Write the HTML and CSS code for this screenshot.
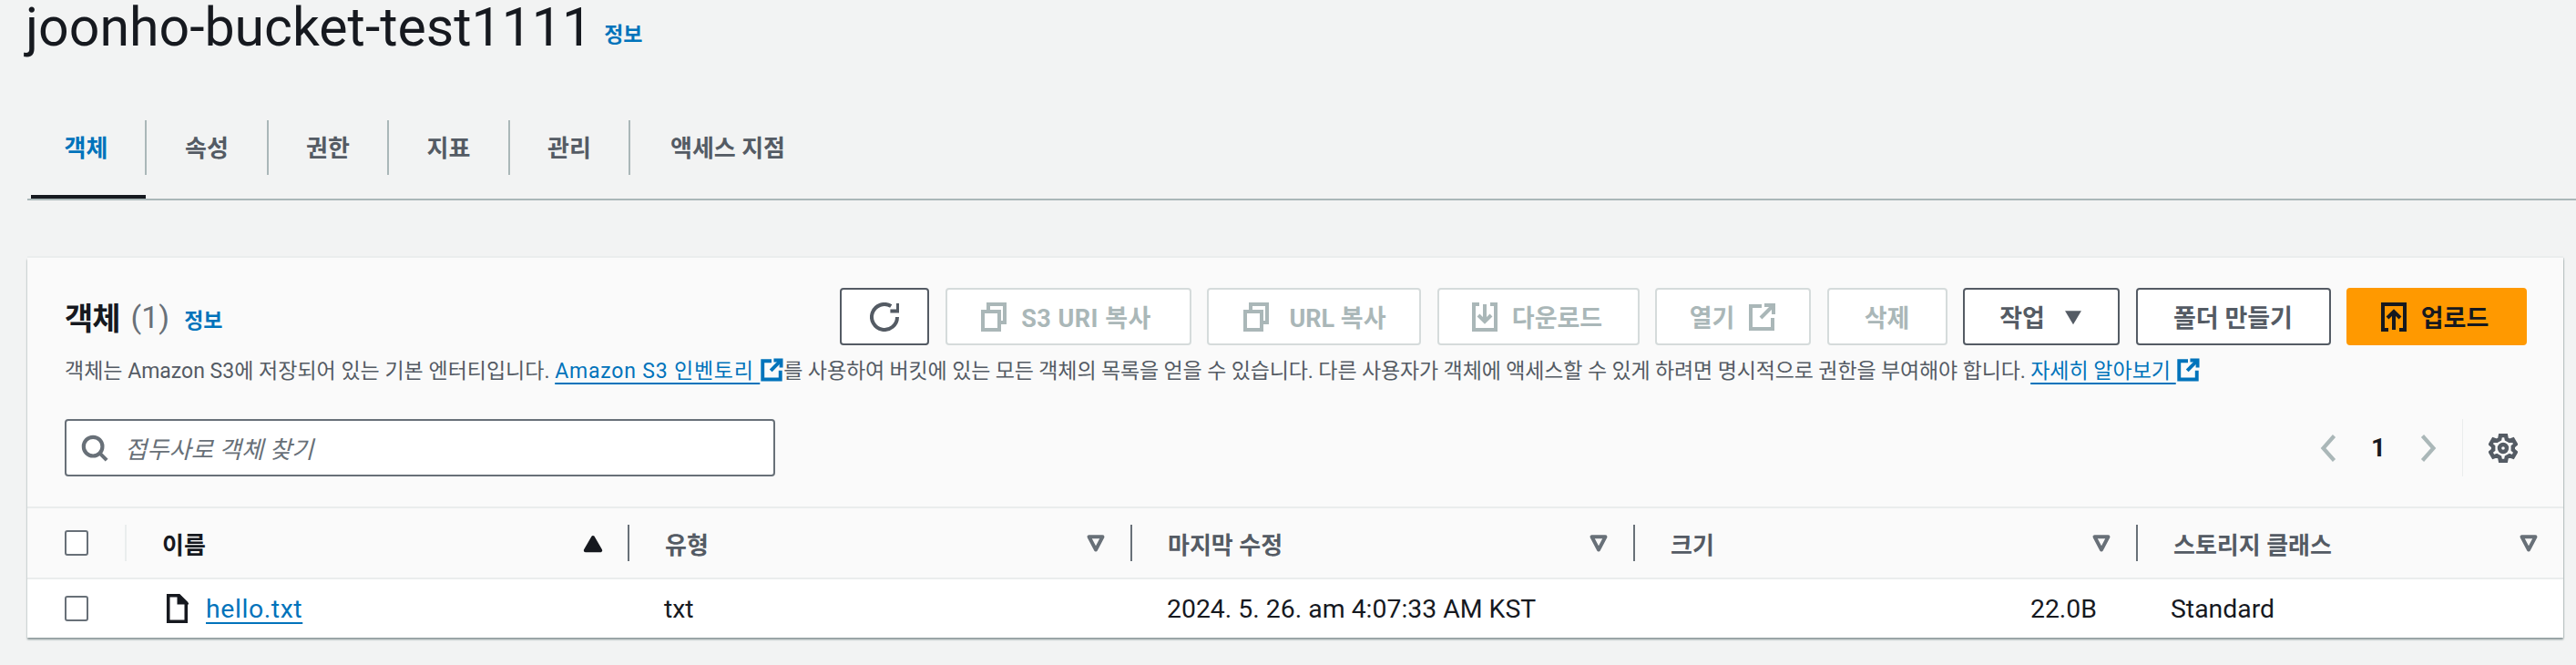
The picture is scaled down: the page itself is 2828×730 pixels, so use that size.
FILE: index.html
```html
<!DOCTYPE html>
<html lang="ko">
<head>
    <meta charset="UTF-8">
    <title>joonho-bucket-test1111</title>
    <link rel="stylesheet" href="styles.css">
</head>
<body>

<!-- 버킷 제목 -->
<div class="page-title">
    <h1>joonho-bucket-test1111</h1>
    <a class="info title-info">정보</a>
</div>

<!-- 탭 -->
<div class="tabs">
    <a class="tab active tab-a">객체</a>
    <a class="tab tab-b">속성</a>
    <a class="tab tab-c">권한</a>
    <a class="tab tab-d">지표</a>
    <a class="tab tab-e">관리</a>
    <a class="tab tab-f">액세스 지점</a>
</div>

<div class="card">
    <div class="card-header">
        <div class="title-row">
            <div class="card-title">
                <h2>객체</h2>
                <span class="count">(1)</span>
                <a class="info">정보</a>
            </div>
            <div class="actions">
                <button class="btn btn-refresh">
                    <svg class="icon" viewBox="0 0 16 16"><path d="M15 8a7 7 0 1 1-3.38-6"/><path d="M15.5 .5v4.3h-4.3"/></svg>
                </button>
                <button class="btn disabled btn-s3">
                    <svg class="icon" viewBox="0 0 16 16"><path d="M2 5h9v10H2z"/><path d="M5 5V1h9v10h-3"/></svg>
                    S3 URI 복사
                </button>
                <button class="btn disabled btn-url">
                    <svg class="icon" viewBox="0 0 16 16"><path d="M2 5h9v10H2z"/><path d="M5 5V1h9v10h-3"/></svg>
                    URL 복사
                </button>
                <button class="btn disabled btn-down">
                    <svg class="icon" viewBox="0 0 16 16"><path d="M5 1H2v14h12V1h-3"/><path d="M8 1v9"/><path d="M4.5 7 8 10.5 11.5 7"/></svg>
                    다운로드
                </button>
                <button class="btn disabled btn-open">
                    열기
                    <svg class="icon" viewBox="0 0 16 16"><path d="M14 8.5V14.5H2V2h6"/><path d="M9.5 1.5h5v5"/><path d="M14.5 1.5 7.5 8.5"/></svg>
                </button>
                <button class="btn disabled btn-del">삭제</button>
                <button class="btn btn-act">
                    작업
                    <svg class="caret" viewBox="0 0 16 16"><path d="M1.5 3h13L8 14z"/></svg>
                </button>
                <button class="btn btn-folder">폴더 만들기</button>
                <button class="btn primary btn-up">
                    <svg class="icon" viewBox="0 0 16 16"><path d="M5 1H2v14h3"/><path d="M11 1h3v14h-3"/><path d="M2 1h12"/><path d="M8 15V6"/><path d="M4.5 8.5 8 5l3.5 3.5"/></svg>
                    업로드
                </button>
            </div>
        </div>
        <p class="desc">객체는 Amazon S3에 저장되어 있는 기본 엔터티입니다. <a class="link wide">Amazon S3 인벤토리 </a><svg class="ext" viewBox="0 0 16 16"><path d="M14 8.5V14.5H2V2h6"/><path d="M9.5 1.5h5v5"/><path d="M14.5 1.5 7.5 8.5"/></svg><span class="desc-rest">를 사용하여 버킷에 있는 모든 객체의 목록을 얻을 수 있습니다. 다른 사용자가 객체에 액세스할 수 있게 하려면 명시적으로 권한을 부여해야 합니다. </span><a class="link">자세히 알아보기 </a><svg class="ext" viewBox="0 0 16 16"><path d="M14 8.5V14.5H2V2h6"/><path d="M9.5 1.5h5v5"/><path d="M14.5 1.5 7.5 8.5"/></svg></p>
        <div class="filter-row">
            <div class="search">
                <svg class="search-icon" viewBox="0 0 16 16"><circle cx="7" cy="7" r="5.5"/><path d="m11 11 4 4"/></svg>
                <span class="placeholder">접두사로 객체 찾기</span>
            </div>
            <div class="pager">
                <svg class="chev" viewBox="0 0 12 20"><path d="M10 1 2 10l8 9"/></svg>
                <span class="page-num">1</span>
                <svg class="chev" viewBox="0 0 12 20"><path d="m2 1 8 9-8 9"/></svg>
                <div class="pager-line">
                    <svg class="gear" viewBox="0 0 16 16"><path d="M6.5 1h3l.4 2 1.6.9 1.9-.7 1.5 2.6-1.5 1.3v1.8l1.5 1.3-1.5 2.6-1.9-.7-1.6.9-.4 2h-3l-.4-2-1.6-.9-1.9.7-1.5-2.6 1.5-1.3V7.1L1.1 5.8l1.5-2.6 1.9.7 1.6-.9z"/><circle cx="8" cy="8" r="2"/></svg>
                </div>
            </div>
        </div>
    </div>

    <div class="table-head">
        <div class="th"><span class="checkbox"></span></div>
        <div class="th"><div class="th-in first sorted">이름<svg class="sort" viewBox="0 0 16 16"><path class="fill" d="M8 4 13.5 13.5H2.5z"/></svg></div></div>
        <div class="th"><div class="th-in">유형<svg class="sort" viewBox="0 0 16 16"><path d="M3 3.5h10L8 13z"/></svg></div></div>
        <div class="th"><div class="th-in">마지막 수정<svg class="sort" viewBox="0 0 16 16"><path d="M3 3.5h10L8 13z"/></svg></div></div>
        <div class="th"><div class="th-in">크기<svg class="sort" viewBox="0 0 16 16"><path d="M3 3.5h10L8 13z"/></svg></div></div>
        <div class="th"><div class="th-in">스토리지 클래스<svg class="sort" viewBox="0 0 16 16"><path d="M3 3.5h10L8 13z"/></svg></div></div>
    </div>
    <div class="table-row">
        <div class="td"><span class="checkbox"></span></div>
        <div class="td td-name">
            <svg class="file" viewBox="0 0 14 18"><path d="M1.5 1h6.5l4.5 4.5V17h-11z"/><path class="fill" d="M8 1l4.5 4.5H8z"/></svg>
            <a class="link">hello.txt</a>
        </div>
        <div class="td td-pad">txt</div>
        <div class="td td-pad">2024. 5. 26. am 4:07:33 AM KST</div>
        <div class="td td-size">22.0B</div>
        <div class="td td-pad">Standard</div>
    </div>
</div>

</body>
</html>
```

FILE: styles.css
```css
body {
    margin: 0;
    background-color: #f2f3f3;
    color: #16191f;
    font-family: Roboto, "Noto Sans CJK KR", sans-serif;
    font-size: 28.4px;
    height: 730px;
    overflow: hidden;
}
a {
    color: #0073bb;
}
svg {
    fill: none;
    stroke: currentColor;
    stroke-width: 2;
}

.page-title {
    display: flex;
    align-items: center;
    height: 60px;
    padding-left: 28px;
}
h1 {
    margin: 0;
    font-size: 59px;
    font-weight: 400;
    line-height: 60px;
}
.info {
    font-size: 23px;
    font-weight: 700;
}
.title-info {
    margin: 12px 0 0 13px;
}

.tabs {
    display: flex;
    height: 88px;
    margin: 70px 0 0 30px;
    border-bottom: 2px solid #aab7b8;
}
.tab {
    display: flex;
    align-items: center;
    justify-content: center;
    height: 60px;
    margin-top: 2px;
    padding-bottom: 3px;
    color: #545b64;
    font-size: 26px;
    font-weight: 700;
    border-right: 2px solid #aab7b8;
    box-sizing: border-box;
}
.tab-a { width: 131px; }
.tab-b { width: 134px; }
.tab-c { width: 132px; }
.tab-d { width: 133px; }
.tab-e { width: 132px; }
.tab-f { width: 214px; border-right: none; }
.tab.active {
    position: relative;
    color: #0073bb;
}
.tab.active::after {
    content: "";
    position: absolute;
    left: 4px;
    right: -1px;
    top: 82px;
    height: 4px;
    background-color: #16191f;
}

.card {
    margin: 63px 14px 0 30px;
    background-color: #fff;
    box-shadow: 0 2px 2px #879596, 0 -2px 0 #eaeded, 1px 0 1px #d5dbdb;
}
.card-header {
    background-color: #fafafa;
    padding: 33px 40px 33px 41px;
    border-bottom: 2px solid #eaeded;
}
.title-row {
    display: flex;
    align-items: center;
    justify-content: space-between;
}
.card-title {
    display: flex;
    align-items: center;
}
h2 {
    margin: 0;
    font-size: 34px;
    font-weight: 700;
    letter-spacing: -1px;
}
.count {
    margin-left: 12px;
    color: #687078;
    font-size: 34px;
}
.card-title .info {
    margin: 4px 0 0 16px;
}

.actions {
    display: flex;
    gap: 17.5px;
}
.btn {
    display: flex;
    align-items: center;
    justify-content: center;
    gap: 14px;
    height: 63px;
    padding: 0;
    background-color: #fff;
    border: 2px solid #545b64;
    border-radius: 4px;
    color: #545b64;
    font-family: inherit;
    font-size: 27px;
    font-weight: 700;
}
.btn.disabled {
    border-color: #d5dbdb;
    color: #aab7b8;
}
.btn.primary {
    background-color: #ff9900;
    border-color: #ff9900;
    color: #16191f;
}
.btn-refresh { width: 98px; }
.btn-s3 { width: 270px; letter-spacing: .5px; padding-right: 6px; }
.btn-url { width: 235px; gap: 20px; }
.btn-down { width: 222px; padding-right: 4px; }
.btn-open { width: 171px; }
.btn-del { width: 132px; }
.btn-act { width: 172px; }
.btn-folder { width: 214px; }
.btn-up { width: 198px; padding-right: 6px; }
.icon {
    width: 32px;
    height: 32px;
}
.caret {
    width: 22px;
    height: 22px;
    margin-left: 6px;
    fill: currentColor;
    stroke: none;
}

.desc {
    height: 28px;
    margin: 13px 0 0;
    color: #545b64;
    font-size: 23px;
    line-height: 28px;
    white-space: nowrap;
}
.desc-rest {
    letter-spacing: -.14px;
}
.link {
    text-decoration: underline;
    text-underline-offset: 5px;
    text-decoration-thickness: 2px;
}
.link.wide {
    letter-spacing: .8px;
}
.ext {
    width: 26px;
    height: 28px;
    color: #0073bb;
    vertical-align: -5px;
    stroke-width: 2.4;
}

.filter-row {
    display: flex;
    justify-content: space-between;
    margin-top: 40px;
}
.search {
    display: flex;
    align-items: center;
    width: 780px;
    height: 63px;
    padding-left: 16px;
    background-color: #fff;
    border: 2px solid #687078;
    border-radius: 4px;
    box-sizing: border-box;
}
.search-icon {
    width: 30px;
    height: 30px;
    color: #687078;
    stroke-width: 2.2;
}
.placeholder {
    margin-left: 18px;
    color: #687078;
    font-size: 26.4px;
    font-style: italic;
}
.pager {
    display: flex;
    align-items: center;
}
.chev {
    width: 19px;
    height: 30px;
    color: #aab7b8;
    stroke-width: 2.8;
}
.page-num {
    margin: 0 37px;
    font-size: 28px;
    font-weight: 700;
}
.pager-line {
    display: flex;
    align-items: center;
    height: 63px;
    margin-left: 28px;
    padding: 0 10px 0 28px;
    border-left: 1px solid #eaeded;
}
.gear {
    width: 32px;
    height: 32px;
    color: #545b64;
    stroke-width: 2.2;
}

.table-head, .table-row {
    display: grid;
    grid-template-columns: 107px 552px 552px 552px 552px 1fr;
}
.table-head {
    height: 76px;
    background-color: #fafafa;
    border-bottom: 2px solid #eaeded;
}
.th {
    display: flex;
    align-items: center;
    color: #545b64;
    font-size: 26px;
    font-weight: 700;
}
.th:first-child, .td:first-child {
    padding-left: 41px;
}
.th-in {
    display: flex;
    align-items: center;
    justify-content: space-between;
    flex: 1;
    height: 40px;
    padding: 0 26px 0 39px;
    border-left: 2px solid #687078;
}
.th-in.first {
    border-left-color: #eaeded;
    color: #16191f;
}
.sort {
    width: 24px;
    height: 24px;
    stroke-width: 2.6;
    stroke-linejoin: round;
    color: #687078;
}
.sorted .sort {
    color: #16191f;
}
.fill {
    fill: currentColor;
}
.checkbox {
    display: block;
    width: 26px;
    height: 28px;
    background-color: #fff;
    border: 2px solid #687078;
    border-radius: 3px;
    box-sizing: border-box;
}
.table-row {
    height: 64px;
    align-items: center;
}
.td-name {
    display: flex;
    align-items: center;
    gap: 19px;
    padding-left: 45px;
}
.td-name .link {
    letter-spacing: .6px;
}
.file {
    width: 25px;
    height: 32px;
    stroke-width: 2;
}
.td-pad {
    padding-left: 40px;
}
.td-size {
    padding-right: 43px;
    text-align: right;
}
.td-pad:last-child {
    padding-left: 38px;
}
```
